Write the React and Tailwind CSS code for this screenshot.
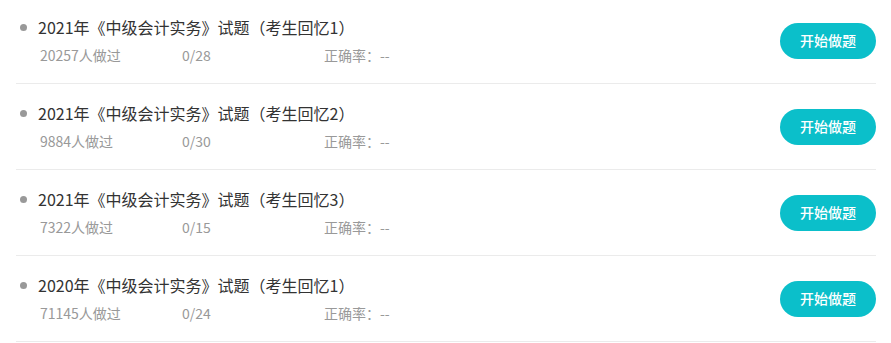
const papers = [
  { title: '2021年《中级会计实务》试题（考生回忆1）', done: '20257人做过', progress: '0/28' },
  { title: '2021年《中级会计实务》试题（考生回忆2）', done: '9884人做过', progress: '0/30' },
  { title: '2021年《中级会计实务》试题（考生回忆3）', done: '7322人做过', progress: '0/15' },
  { title: '2020年《中级会计实务》试题（考生回忆1）', done: '71145人做过', progress: '0/24' },
]

export default function App() {
  return (
    <div className="w-[891px] h-[343px] bg-white overflow-hidden" style={{ fontFamily: '"Noto Sans CJK SC", "Noto Sans", sans-serif' }}>
      <div className="ml-[16px] w-[860px] -mt-[2px]">
        {papers.map((p, i) => (
          <div key={i} className="h-[86px] border-b border-[#ebebeb] flex items-center justify-between">
            <div className="flex flex-col">
              <div className="flex items-center">
                <span className="ml-[4px] w-[7px] h-[7px] rounded-full bg-[#999]" />
                <span className="ml-[11px] text-[16px] leading-[22px] text-[#333]">{p.title}</span>
              </div>
              <div className="flex mt-[7px] ml-[24px] text-[14px] leading-[20px] text-[#999]">
                <span className="w-[142px]">{p.done}</span>
                <span className="w-[142px]">{p.progress}</span>
                <span>正确率：--</span>
              </div>
            </div>
            <button className="w-[96px] h-[36px] rounded-full bg-[#0bbfca] text-white text-[14px] font-medium">开始做题</button>
          </div>
        ))}
      </div>
    </div>
  )
}
